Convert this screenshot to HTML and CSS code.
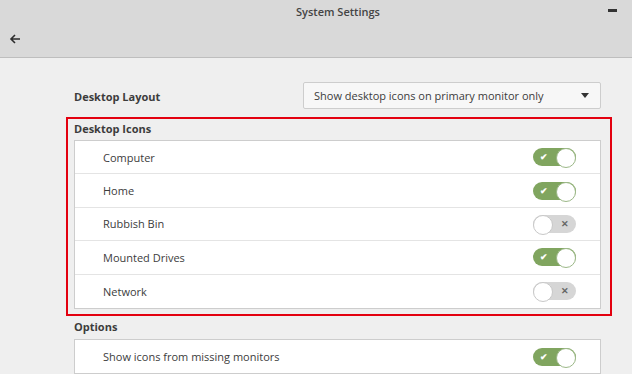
FILE: index.html
```html
<!DOCTYPE html>
<html lang="en">
<head>
    <meta charset="UTF-8">
    <title>System Settings</title>
    <link rel="stylesheet" href="styles.css">
</head>
<body>
    <header class="titlebar">
        <div class="title-row">
            <span class="title">System Settings</span>
            <span class="minimize"></span>
        </div>
        <div class="toolbar">
            <svg class="back" width="12" height="12" viewBox="0 0 12 12">
                <path d="M11 6H2M6 2L2 6l4 4" fill="none" stroke="#2d2d2d" stroke-width="1.6"/>
            </svg>
        </div>
    </header>

    <main class="content">
        <div class="setting-line">
            <span class="label">Desktop Layout</span>
            <div class="combo">
                <span>Show desktop icons on primary monitor only</span>
                <span class="combo-arrow"></span>
            </div>
        </div>

        <!-- highlighted section -->
        <section class="highlight">
            <h2 class="section-title">Desktop Icons</h2>
            <div class="frame">
                <div class="row"><span>Computer</span><span class="switch on"></span></div>
                <div class="row"><span>Home</span><span class="switch on"></span></div>
                <div class="row"><span>Rubbish Bin</span><span class="switch off"></span></div>
                <div class="row"><span>Mounted Drives</span><span class="switch on"></span></div>
                <div class="row"><span>Network</span><span class="switch off"></span></div>
            </div>
        </section>

        <section class="options">
            <h2 class="section-title">Options</h2>
            <div class="frame">
                <div class="row"><span>Show icons from missing monitors</span><span class="switch on"></span></div>
            </div>
        </section>
    </main>
</body>
</html>
```

FILE: styles.css
```css
:root {
    --header-bg: #d9d9d9;
    --page-bg: #efefef;
    --text-color: #3c3c3c;
    --border-color: #cdcdcd;
    --line-color: #e4e4e4;
    --switch-on: #80a55f;
    --switch-off: #d6d6d6;
    --highlight: #e3000f;
}

* {
    box-sizing: border-box;
    margin: 0;
    padding: 0;
}

body {
    width: 632px;
    height: 374px;
    overflow: hidden;
    background-color: var(--page-bg);
    color: var(--text-color);
    font-family: "Open Sans", "Noto Sans", sans-serif;
    font-size: 11px;
}

.titlebar {
    height: 58px;
    background-color: var(--header-bg);
    border-bottom: 1px solid #bebebe;
}

.title-row {
    position: relative;
    height: 22px;
    display: flex;
    align-items: center;
    justify-content: center;
    padding-left: 44px;
}

.title {
    font-weight: 600;
    color: #444;
}

.minimize {
    position: absolute;
    right: 15px;
    top: 9px;
    width: 9px;
    height: 3px;
    background-color: #333;
}

.toolbar {
    height: 35px;
    display: flex;
    align-items: center;
    padding: 0 0 2px 9px;
}

.content {
    margin-left: 74px;
    width: 527px;
}

.setting-line {
    height: 59px;
    padding-top: 24px;
    display: flex;
    justify-content: space-between;
    align-items: flex-start;
}

.label {
    font-weight: 700;
    line-height: 29px;
}

.combo {
    width: 298px;
    height: 27px;
    display: flex;
    align-items: center;
    justify-content: space-between;
    padding: 0 11px 0 10px;
    background-color: #f7f7f7;
    border: 1px solid var(--border-color);
    border-radius: 2px;
}

.combo-arrow {
    width: 0;
    height: 0;
    border-left: 4px solid transparent;
    border-right: 4px solid transparent;
    border-top: 5px solid #333;
}

.highlight {
    margin: 0 -11px 0 -8px;
    padding: 0 9px 5px 6px;
    border: 2px solid var(--highlight);
}

.section-title {
    font-size: 11px;
    font-weight: 700;
    height: 21px;
    line-height: 19px;
}

.frame {
    background-color: #fff;
    border: 1px solid var(--border-color);
}

.row {
    height: 33.4px;
    display: flex;
    align-items: center;
    justify-content: space-between;
    padding: 0 24px 0 28px;
    border-bottom: 1px solid var(--line-color);
}

.row:last-child {
    border-bottom: none;
}

.switch {
    position: relative;
    width: 43px;
    height: 18px;
    border-radius: 9px;
}

.switch::before {
    content: "";
    position: absolute;
    top: 0;
    width: 18px;
    height: 18px;
    border-radius: 50%;
    background-color: #fff;
    border: 1px solid #c8c8c8;
}

.switch::after {
    position: absolute;
    top: 0;
    line-height: 18px;
    font-size: 9px;
    font-weight: 700;
}

.switch.on {
    background-color: var(--switch-on);
}

.switch.on::before {
    right: 0;
    border-color: #9cb888;
}

.switch.on::after {
    content: "\2714";
    left: 7px;
    color: #fff;
}

.switch.off {
    background-color: var(--switch-off);
}

.switch.off::before {
    left: 0;
}

.switch.off::after {
    content: "\2715";
    right: 7px;
    color: #666;
}

.options {
    padding-top: 1px;
}

.options .section-title {
    height: 22px;
    line-height: 19px;
}
```
